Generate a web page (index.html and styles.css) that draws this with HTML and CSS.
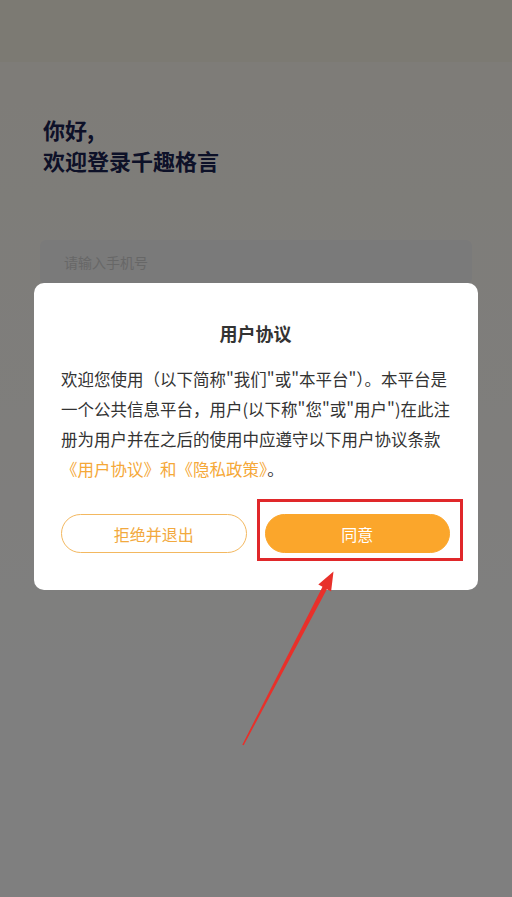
FILE: index.html
```html
<!DOCTYPE html>
<html lang="zh-CN">
<head>
<meta charset="utf-8">
<title>登录</title>
<link rel="stylesheet" href="styles.css">
</head>
<body>
<div class="page">
  <div class="statusbar"></div>
  <div class="greeting">
    <p>你好,</p>
    <p>欢迎登录千趣格言</p>
  </div>
  <div class="phone-input">请输入手机号</div>
</div>

<div class="mask"></div>

<div class="modal">
  <div class="dialog">
    <h2 class="dialog-title">用户协议</h2>
    <p class="dialog-body">欢迎您使用（以下简称"我们"或"本平台"）。本平台是一个公共信息平台，用户(以下称"您"或"用户")在此注册为用户并在之后的使用中应遵守以下用户协议条款<span class="link">《用户协议》和《隐私政策》</span>。</p>
    <div class="dialog-actions">
      <button class="btn btn-outline">拒绝并退出</button>
      <button class="btn btn-fill">同意</button>
    </div>
  </div>
</div>

<div class="highlight"></div>
<svg class="arrow" width="512" height="897" viewBox="0 0 512 897">
  <polygon points="242.3,744.7 322.5,586.8 318.3,584.6 333.5,571.5 331.1,591.5 326.9,589.2 243.7,745.3" fill="#e8302a"/>
</svg>
</body>
</html>
```

FILE: styles.css
```css
* { box-sizing: border-box; }
html, body { margin: 0; padding: 0; }
body {
  width: 512px;
  height: 897px;
  overflow: hidden;
  font-family: "Noto Sans CJK SC", "Noto Sans", sans-serif;
  position: relative;
  background: #ffffff;
}
.page {
  height: 897px;
  background: linear-gradient(#fdf8ef 0px, #fdfaf3 200px, #ffffff 700px);
}
.statusbar {
  height: 62px;
  background: #f9f4e7;
}
.greeting {
  margin: 52px 0 0 43px;
  color: #1b2350;
  font-size: 22px;
  font-weight: 700;
  line-height: 31px;
}
.greeting p { margin: 0; }
.phone-input {
  margin: 64px 40px 0 40px;
  height: 44px;
  border-radius: 6px;
  background: #f4f4f4;
  padding-left: 24px;
  font-size: 14px;
  line-height: 44px;
  color: #cfcfcf;
}
.mask {
  position: absolute;
  inset: 0;
  background: rgba(0, 0, 0, 0.5);
}
.modal {
  position: absolute;
  left: 0;
  right: 0;
  top: 283px;
  display: flex;
  justify-content: center;
}
.dialog {
  width: 444px;
  background: #ffffff;
  border-radius: 10px;
  padding: 37px 28px 37px 27px;
}
.dialog-title {
  margin: 0;
  text-align: center;
  font-size: 18px;
  line-height: 26px;
  font-weight: 700;
  color: #333333;
}
.dialog-body {
  margin: 18px 0 0 0;
  font-size: 16.5px;
  line-height: 30px;
  color: #333333;
}
.link { color: #f5a838; }
.dialog-actions {
  display: flex;
  gap: 18px;
  margin-top: 30px;
}
.btn {
  flex: 1;
  height: 39px;
  border-radius: 20px;
  font-family: inherit;
  font-size: 16px;
  padding: 0;
}
.btn-outline {
  background: #ffffff;
  border: 1px solid #f3b860;
  color: #f2a93e;
}
.btn-fill {
  background: #fba62b;
  border: 1px solid #fba62b;
  color: #ffffff;
}
.highlight {
  position: absolute;
  left: 257px;
  top: 499px;
  width: 206px;
  height: 62px;
  border: 3px solid #e0282a;
}
.arrow {
  position: absolute;
  left: 0;
  top: 0;
}
```
